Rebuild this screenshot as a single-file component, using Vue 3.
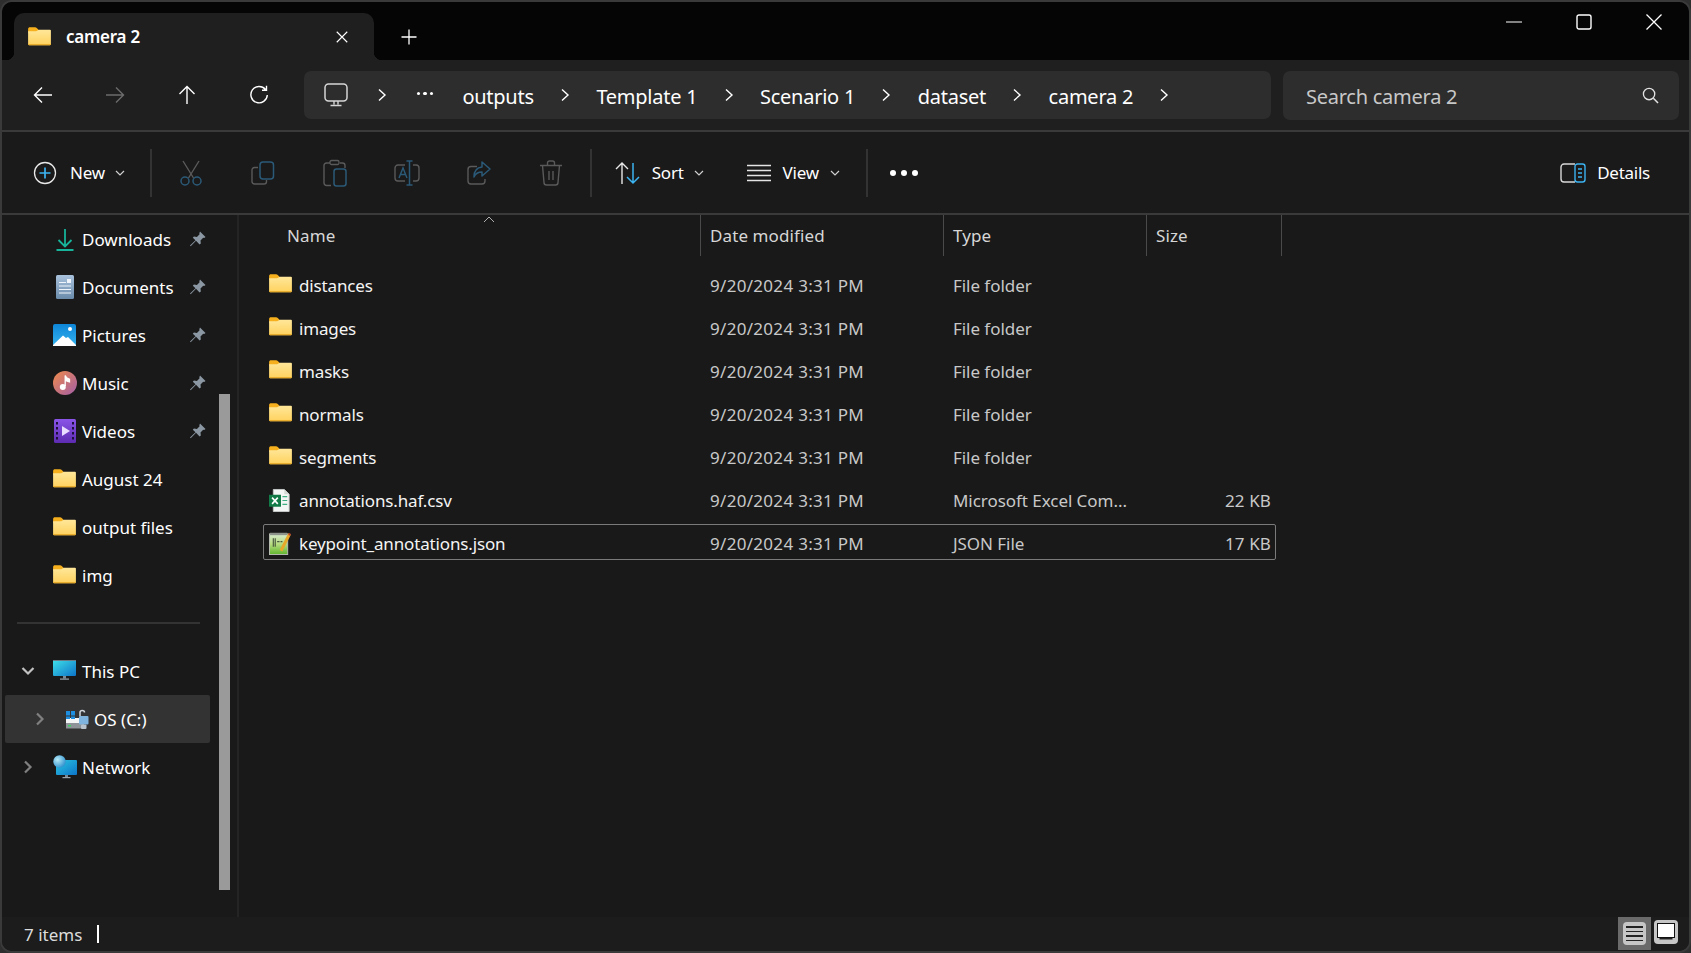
<script setup>
const folder = `<defs><linearGradient id="fg" x1="0" y1="0" x2="0" y2="1"><stop offset="0" stop-color="#ffe79a"/><stop offset="1" stop-color="#ffd25e"/></linearGradient></defs><path d="M0 2.2C0 1 .8.3 2 .3h5.4c.6 0 1 .2 1.400.5L11 3v3H0z" fill="#f6b01e"/><path d="M0 4.600h8.500L11.300 2.800H23c.6 0 1 .4 1 1V18c0 .7-.4 1.100-1 1.100H1c-.6 0-1-.4-1-1.100z" fill="url(#fg)"/><path d="M0 18h24v.3c0 .5-.4.800-1 .800H1c-.6 0-1-.3-1-.8z" fill="#e9ad2e"/>`

const icons = {
  folder,
  download: `<path d="M12 2v17M5.500 13l6.500 6.500 6.500-6.500" fill="none" stroke="#17b39a" stroke-width="1.800"/><path d="M3.500 23h17" stroke="#17b39a" stroke-width="2.200"/>`,
  docs: `<defs><linearGradient id="dc" x1="0" y1="0" x2="0" y2="1"><stop offset="0" stop-color="#a9c2dc"/><stop offset="1" stop-color="#6a8bab"/></linearGradient></defs><rect x="3" y="0" width="18" height="24" rx="1.500" fill="url(#dc)"/><path d="M6 7.500h7M6 11h12M6 14.500h12M6 18h12" stroke="#eef4fa" stroke-width="1.200"/><rect x="14" y="4" width="4" height="4" fill="#eef4fa"/>`,
  pics: `<defs><linearGradient id="pc" x1="0" y1="0" x2="0" y2="1"><stop offset="0" stop-color="#0e86d8"/><stop offset="1" stop-color="#35b3ee"/></linearGradient></defs><rect x="0" y="1" width="23" height="22" rx="2" fill="url(#pc)"/><circle cx="17" cy="6" r="2" fill="#fff"/><path d="M0 22l10-9.500 3 2.500 2-1 8 8v1H0z" fill="#fff"/>`,
  music: `<defs><linearGradient id="mc" x1="0" y1="0" x2="1" y2="1"><stop offset="0" stop-color="#ee8a4a"/><stop offset="1" stop-color="#a45ea8"/></linearGradient></defs><circle cx="12" cy="12" r="12" fill="url(#mc)"/><path d="M12.200 4.500v10.500M12.200 4.500c.6 2.600 2.600 3.200 4.300 3.800v2.600c-1.700-.4-3-1-4.300-2.200z" fill="#fff" stroke="#fff" stroke-width="1.300"/><circle cx="9.800" cy="16" r="3" fill="#fff"/>`,
  video: `<defs><linearGradient id="vc" x1="0" y1="0" x2="0" y2="1"><stop offset="0" stop-color="#8a55e8"/><stop offset="1" stop-color="#5d2bb0"/></linearGradient></defs><rect x="1" y="0" width="22" height="24" rx="1.500" fill="url(#vc)"/><path d="M3 3h2v2.500H3zM3 8h2v2.500H3zM3 13h2v2.500H3zM3 18h2v2.500H3zM19 3h2v2.500h-2zM19 8h2v2.500h-2zM19 13h2v2.500h-2zM19 18h2v2.500h-2z" fill="#1c0f3a"/><path d="M9 7l8 5-8 5z" fill="#e8ddff"/>`,
  pc: `<defs><linearGradient id="pcg" x1="0" y1="0" x2="1" y2="1"><stop offset="0" stop-color="#3fe0e8"/><stop offset="1" stop-color="#0d74c9"/></linearGradient></defs><rect x="0" y="1" width="23" height="16" rx="1" fill="url(#pcg)"/><path d="M0 1h23v1H0z" fill="#6c7a86"/><rect x="10" y="17" width="3" height="2.500" fill="#7a8894"/><rect x="7" y="19.500" width="9" height="1.200" fill="#98a4ae"/>`,
  drive: `<path d="M1 15.500h18v6H1z" fill="#8d9399"/><path d="M1 11h20v5H1z" fill="#f2f4f6"/><path d="M3 18h3v1.500H3z" fill="#3bd35f"/><path d="M1 4h4v4.500H1zM6 4h4v4.500H6zM1 9.500h4V12H1zM6 9.500h4V12H6z" fill="#1e8fe0"/><path d="M15 9V5.500c0-2.800 4.500-2.800 4.500 0" fill="none" stroke="#cfd6dc" stroke-width="1.500"/><rect x="14" y="9" width="9.500" height="8.500" rx="1" fill="#7fb4de"/><rect x="16" y="17.500" width="5.500" height="4.500" rx="1" fill="#b8c2ca"/>`,
  network: `<defs><linearGradient id="nw" x1="0" y1="0" x2="1" y2="1"><stop offset="0" stop-color="#2bc6e0"/><stop offset="1" stop-color="#0d74c9"/></linearGradient><radialGradient id="gl" cx=".35" cy=".35" r=".8"><stop offset="0" stop-color="#b8ecf8"/><stop offset="1" stop-color="#1c84c8"/></radialGradient></defs><rect x="3" y="5" width="21" height="15" rx="1" fill="url(#nw)"/><rect x="12" y="20" width="3" height="2" fill="#7a8894"/><rect x="9.500" y="22" width="8" height="1.200" fill="#98a4ae"/><circle cx="6.500" cy="6.500" r="6.200" fill="url(#gl)"/>`,
  excel: `<path d="M4.500 .5H16l5 5v18H4.500z" fill="#f4f6f5" stroke="#c6cac8"/><path d="M16 .5v5h5" fill="#d4d9d6"/><path d="M14 8h5M14 12h5M14 16h5" stroke="#3fae82" stroke-width="1.200"/><rect x="0" y="6" width="12.500" height="12.500" fill="#117a46"/><path d="M3.200 9l6 6.500M9.200 9l-6 6.500" stroke="#fff" stroke-width="1.700"/>`,
  json: `<defs><linearGradient id="jg" x1="0" y1="0" x2="0" y2="1"><stop offset="0" stop-color="#d8ecd0"/><stop offset=".5" stop-color="#b6db7e"/><stop offset="1" stop-color="#5fb52e"/></linearGradient></defs><rect x=".5" y="2" width="19" height="21.500" fill="url(#jg)" stroke="#b8bdb4"/><path d="M1 .8h18v2.500H1z" fill="#8e948c"/><path d="M4.500 6.500v9M6.500 6.500v9" stroke="#48583c" stroke-width="1.200"/><path d="M8.500 10h2.500M12 10h2" stroke="#48583c" stroke-width="1.200"/><path d="M21.500 2L12.500 19.500" stroke="#e8a92a" stroke-width="3.200"/><path d="M21 1l2 1-1 2-2-1z" fill="#b5402c"/>`
}

const quick = [
  { name: 'Downloads', icon: 'download', pin: true },
  { name: 'Documents', icon: 'docs', pin: true },
  { name: 'Pictures', icon: 'pics', pin: true },
  { name: 'Music', icon: 'music', pin: true },
  { name: 'Videos', icon: 'video', pin: true },
  { name: 'August 24', icon: 'folder' },
  { name: 'output files', icon: 'folder' },
  { name: 'img', icon: 'folder' }
]

const crumbs = ['outputs', 'Template 1', 'Scenario 1', 'dataset', 'camera 2']

const DATE = '9/20/2024 3:31 PM'
const files = [
  { name: 'distances', type: 'File folder', size: '', icon: 'folder' },
  { name: 'images', type: 'File folder', size: '', icon: 'folder' },
  { name: 'masks', type: 'File folder', size: '', icon: 'folder' },
  { name: 'normals', type: 'File folder', size: '', icon: 'folder' },
  { name: 'segments', type: 'File folder', size: '', icon: 'folder' },
  { name: 'annotations.haf.csv', type: 'Microsoft Excel Com...', size: '22 KB', icon: 'excel' },
  { name: 'keypoint_annotations.json', type: 'JSON File', size: '17 KB', icon: 'json', selected: true }
]
</script>

<template>
  <div class="window">
    <header class="titlebar">
      <div class="tab">
        <svg class="ic-folder" viewBox="0 0 24 20" v-html="icons.folder"></svg>
        <span class="tab-title">camera 2</span>
        <svg class="tab-close" viewBox="0 0 16 16"><path d="M2 2l12 12M14 2L2 14" stroke="#fff" stroke-width="1.300" fill="none" /></svg>
      </div>
      <button class="newtab">
        <svg viewBox="0 0 16 16" width="16" height="16"><path d="M8 .5v15M.5 8h15" stroke="#fff" stroke-width="1.300" /></svg>
      </button>
      <div class="controls">
        <div class="ctrl"><svg viewBox="0 0 16 16" width="16" height="16"><path d="M0 8h16" stroke="#fff" stroke-width="1.200" /></svg></div>
        <div class="ctrl"><svg viewBox="0 0 16 16" width="16" height="16"><rect x="1" y="1" width="14" height="14" rx="2" fill="none" stroke="#fff" stroke-width="1.400" /></svg></div>
        <div class="ctrl"><svg viewBox="0 0 16 16" width="16" height="16"><path d="M.5 .5l15 15M15.500 .5l-15 15" stroke="#fff" stroke-width="1.300" /></svg></div>
      </div>
    </header>

    <nav class="navbar">
      <div class="navbtn"><svg viewBox="0 0 20 20" width="20" height="20"><path d="M19 10H1.500M9 2.500L1.500 10 9 17.500" fill="none" stroke="#fff" stroke-width="1.400" /></svg></div>
      <div class="navbtn"><svg viewBox="0 0 20 20" width="20" height="20"><path d="M1 10h17.500M11 2.500l7.500 7.500-7.500 7.500" fill="none" stroke="#6c6c6c" stroke-width="1.400" /></svg></div>
      <div class="navbtn"><svg viewBox="0 0 20 20" width="20" height="20"><path d="M10 19V1.500M2.500 9L10 1.500 17.500 9" fill="none" stroke="#fff" stroke-width="1.400" /></svg></div>
      <div class="navbtn"><svg viewBox="0 0 20 20" width="20" height="20"><path d="M16.500 4.500A8.200 8.200 0 1 0 18.300 10M17.500 .8v4.400H13" fill="none" stroke="#fff" stroke-width="1.400" /></svg></div>
      <div class="address">
        <svg class="monitor" viewBox="0 0 24 24" width="24" height="24"><rect x="1" y="1" width="22" height="17" rx="3.500" fill="none" stroke="#d6d6d6" stroke-width="1.500" /><path d="M10 18v3.500M14 18v3.500M6.500 22.500h11" fill="none" stroke="#d6d6d6" stroke-width="1.400" /></svg>
        <svg class="chev first" viewBox="0 0 10 14" width="10" height="14"><path d="M2 1.500L8 7l-6 5.500" fill="none" stroke="#fff" stroke-width="1.400" /></svg>
        <div class="more"><b></b><b></b><b></b></div>
        <template v-for="c in crumbs" :key="c">
          <span class="crumb">{{ c }}</span>
          <svg class="chev" viewBox="0 0 10 14" width="10" height="14"><path d="M2 1.500L8 7l-6 5.500" fill="none" stroke="#fff" stroke-width="1.400" /></svg>
        </template>
      </div>
      <div class="search">
        <span class="search-text">Search camera 2</span>
        <svg viewBox="0 0 18 18" width="17" height="17"><circle cx="7.500" cy="7.500" r="6" fill="none" stroke="#e2e2e2" stroke-width="1.400" /><path d="M12 12l5 5" stroke="#e2e2e2" stroke-width="1.600" /></svg>
      </div>
    </nav>

    <section class="toolbar">
      <div class="tool new">
        <svg viewBox="0 0 24 24" width="24" height="24"><circle cx="12" cy="12" r="10.500" fill="none" stroke="#e8e8e8" stroke-width="1.300" /><path d="M12 6.500v11M6.500 12h11" stroke="#3db4f2" stroke-width="1.700" /></svg>
        <span>New</span>
        <svg class="caret" viewBox="0 0 10 6" width="10" height="6"><path d="M1 1l4 4 4-4" fill="none" stroke="#cfcfcf" stroke-width="1.200" /></svg>
      </div>
      <i class="tsep"></i>
      <div class="iconbtn"><svg viewBox="0 0 24 26" width="24" height="26"><path d="M4 1l10.500 17M20 1L9.500 18" fill="none" stroke="#5a5a5a" stroke-width="1.400" /><circle cx="6" cy="21" r="4" fill="none" stroke="#2b5a78" stroke-width="1.500" /><circle cx="18" cy="21" r="4" fill="none" stroke="#2b5a78" stroke-width="1.500" /></svg></div>
      <div class="iconbtn"><svg viewBox="0 0 24 24" width="24" height="24"><path d="M7 6.500H3.500A2.500 2.500 0 0 0 1 9v11.500A2.500 2.500 0 0 0 3.500 23H13a2.500 2.500 0 0 0 2.500-2.500V19" fill="none" stroke="#5a5a5a" stroke-width="1.400" /><rect x="9" y="1" width="13.500" height="17" rx="3" fill="none" stroke="#2b5a78" stroke-width="1.500" /></svg></div>
      <div class="iconbtn"><svg viewBox="0 0 24 28" width="24" height="28"><path d="M7 4H3.500A2.500 2.500 0 0 0 1 6.500V24a2.500 2.500 0 0 0 2.500 2.500H8M17 4h2.500A2.500 2.500 0 0 1 22 6.500V9" fill="none" stroke="#5a5a5a" stroke-width="1.400" /><rect x="7" y="1.500" width="9" height="4" rx="1.500" fill="none" stroke="#5a5a5a" stroke-width="1.300" /><rect x="11" y="10" width="12" height="17" rx="2.500" fill="none" stroke="#2b5a78" stroke-width="1.500" /></svg></div>
      <div class="iconbtn"><svg viewBox="0 0 26 26" width="26" height="26"><path d="M11 5H4a3 3 0 0 0-3 3v10a3 3 0 0 0 3 3h7M19 5h3a3 3 0 0 1 3 3v10a3 3 0 0 1-3 3h-3" fill="none" stroke="#5a5a5a" stroke-width="1.400" /><path d="M5 18L9 8l4 10M6.500 14.500h5" fill="none" stroke="#2b5a78" stroke-width="1.400" /><path d="M15.500 1v24M12.500 1h6M12.500 25h6" fill="none" stroke="#2b5a78" stroke-width="1.500" /></svg></div>
      <div class="iconbtn"><svg viewBox="0 0 24 24" width="24" height="24"><path d="M10 5.500H4A3 3 0 0 0 1 8.500V20a3 3 0 0 0 3 3h11a3 3 0 0 0 3-3v-2" fill="none" stroke="#5a5a5a" stroke-width="1.400" /><path d="M15 1l8 7-8 7v-4c-4 0-6.500 1.500-8 5 0-6 3-9.500 8-10z" fill="none" stroke="#2b5a78" stroke-width="1.500" stroke-linejoin="round" /></svg></div>
      <div class="iconbtn"><svg viewBox="0 0 24 26" width="24" height="26"><path d="M1 5.500h22M8.500 5.500V3a2 2 0 0 1 2-2h3a2 2 0 0 1 2 2v2.500M3.500 5.500l1.500 17a2.500 2.500 0 0 0 2.500 2.500h9a2.500 2.500 0 0 0 2.500-2.500l1.500-17M10 11v9M14 11v9" fill="none" stroke="#5a5a5a" stroke-width="1.400" /></svg></div>
      <i class="tsep second"></i>
      <div class="tool sort">
        <svg viewBox="0 0 26 24" width="26" height="24"><path d="M7 23V2M1 8l6-6 6 6" fill="none" stroke="#e8e8e8" stroke-width="1.400" /><path d="M18 2v20M12 16l6 6 6-6" fill="none" stroke="#3db4f2" stroke-width="1.500" /></svg>
        <span>Sort</span>
        <svg class="caret" viewBox="0 0 10 6" width="10" height="6"><path d="M1 1l4 4 4-4" fill="none" stroke="#cfcfcf" stroke-width="1.200" /></svg>
      </div>
      <div class="tool view">
        <svg viewBox="0 0 24 18" width="24" height="18"><path d="M0 1.500h24M0 6.500h24M0 11.500h24M0 16.500h24" stroke="#e4e4e4" stroke-width="1.400" /></svg>
        <span>View</span>
        <svg class="caret" viewBox="0 0 10 6" width="10" height="6"><path d="M1 1l4 4 4-4" fill="none" stroke="#cfcfcf" stroke-width="1.200" /></svg>
      </div>
      <i class="tsep third"></i>
      <div class="dots"><b></b><b></b><b></b></div>
      <div class="details">
        <svg viewBox="0 0 26 20" width="26" height="20"><path d="M15 1H4a3 3 0 0 0-3 3v12a3 3 0 0 0 3 3h11" fill="none" stroke="#d8d8d8" stroke-width="1.400" /><rect x="15" y="1" width="10" height="18" rx="2.500" fill="none" stroke="#3db4f2" stroke-width="1.400" /><path d="M18 6h4M18 10h4M18 14h4" stroke="#3db4f2" stroke-width="1.400" /></svg>
        <span>Details</span>
      </div>
    </section>

    <main class="body">
      <aside class="sidebar">
        <div v-for="q in quick" :key="q.name" class="side-row">
          <svg class="side-icon" :class="{ 'ic-folder': q.icon === 'folder' }" :viewBox="q.icon === 'folder' ? '0 0 24 20' : '0 0 24 24'" v-html="icons[q.icon]"></svg>
          <span class="side-name">{{ q.name }}</span>
          <svg v-if="q.pin" class="pin" viewBox="0 0 16 16" width="16" height="16"><path d="M10 .5l5.500 5.500-1.300 1-1-.3-2.700 2.700.3 3-1.200 1.100L6 9.800.7 15.300 0 14.600 5.500 9.300 2.800 6.800 3.900 5.600l3 .3L9.600 3.200l-.3-1z" fill="#8b97a3" /></svg>
        </div>
        <div class="side-divider"><hr /></div>
        <div class="side-row">
          <svg class="exp down" viewBox="0 0 14 10" width="14" height="10"><path d="M1.500 2L7 7.500 12.500 2" fill="none" stroke="#c2c2c2" stroke-width="2.200" /></svg>
          <svg class="side-icon" viewBox="0 0 24 24" v-html="icons.pc"></svg>
          <span class="side-name">This PC</span>
        </div>
        <div class="side-row active">
          <svg class="exp" viewBox="0 0 10 14" width="10" height="14"><path d="M2 1.500L7.500 7 2 12.500" fill="none" stroke="#808080" stroke-width="2.200" /></svg>
          <svg class="side-icon" viewBox="0 0 24 24" v-html="icons.drive"></svg>
          <span class="side-name">OS (C:)</span>
        </div>
        <div class="side-row">
          <svg class="exp" viewBox="0 0 10 14" width="10" height="14"><path d="M2 1.500L7.500 7 2 12.500" fill="none" stroke="#808080" stroke-width="2.200" /></svg>
          <svg class="side-icon" viewBox="0 0 24 24" v-html="icons.network"></svg>
          <span class="side-name">Network</span>
        </div>
        <div class="scroll-thumb"></div>
      </aside>

      <section class="files">
        <svg class="sort-caret" viewBox="0 0 12 7" width="12" height="7"><path d="M1 6l5-5 5 5" fill="none" stroke="#b0b0b0" stroke-width="1" /></svg>
        <div class="head">
          <div class="hcell hname">Name</div>
          <div class="hcell">Date modified</div>
          <div class="hcell">Type</div>
          <div class="hcell">Size</div>
        </div>
        <div v-for="f in files" :key="f.name" class="row" :class="{ selected: f.selected }">
          <div class="cell cname">
            <svg class="file-icon" :class="{ 'ic-folder': f.icon === 'folder' }" :viewBox="f.icon === 'folder' ? '0 0 24 20' : '0 0 24 24'" v-html="icons[f.icon]"></svg>
            <span>{{ f.name }}</span>
          </div>
          <div class="cell cmeta date">{{ DATE }}</div>
          <div class="cell cmeta">{{ f.type }}</div>
          <div class="cell csize">{{ f.size }}</div>
        </div>
      </section>
    </main>

    <footer class="status">
      <span class="count">7 items</span>
      <i class="cursor"></i>
      <div class="views">
        <div class="vbtn on"><div class="vlist"><b></b><b></b><b></b><b></b></div></div>
        <div class="vbtn tile"><div class="vtile"><i></i></div></div>
      </div>
    </footer>
  </div>
</template>

<style>
html, body { margin: 0; background: #2e2e2e; }
</style>

<style scoped>
.window {
  width: 1691px;
  height: 953px;
  box-sizing: border-box;
  border: 2px solid #3a3a3a;
  border-radius: 12px;
  overflow: hidden;
  display: flex;
  flex-direction: column;
  background: #191919;
  color: #fff;
  font-family: "Noto Sans", "Open Sans", sans-serif;
  font-size: 17px;
  letter-spacing: -0.25px;
  position: relative;
}
svg { display: block; flex: none; overflow: visible; }

.titlebar { height: 58px; flex: none; background: #050505; display: flex; }
.tab {
  position: relative;
  margin: 11px 0 0 12px;
  width: 360px;
  height: 47px;
  box-sizing: border-box;
  padding: 0 25px 0 14px;
  background: #1f1f1f;
  border-radius: 10px 10px 0 0;
  display: flex;
  align-items: center;
}
.tab::before, .tab::after {
  content: "";
  position: absolute;
  bottom: 0;
  width: 8px;
  height: 8px;
}
.tab::before { left: -8px; background: radial-gradient(circle at 0 0, transparent 8px, #1f1f1f 8.500px); }
.tab::after { right: -8px; background: radial-gradient(circle at 100% 0, transparent 8px, #1f1f1f 8.500px); }
.ic-folder { width: 23px; height: 19px; }
.tab-title { margin-left: 15px; font-weight: 600; font-size: 17px; flex: 1; }
.tab-close { width: 14px; height: 14px; }
.newtab {
  margin: 11px 0 0 27px;
  width: 16px;
  height: 47px;
  padding: 0;
  background: none;
  border: 0;
  display: flex;
  align-items: center;
}
.controls { margin-left: auto; display: flex; height: 40px; }
.ctrl { width: 70px; display: flex; align-items: center; justify-content: center; }

.navbar {
  height: 70px;
  flex: none;
  background: #1f1f1f;
  border-bottom: 2px solid #3a3a3a;
  display: flex;
  align-items: center;
  padding-left: 5px;
}
.navbtn { width: 72px; height: 48px; display: flex; align-items: center; justify-content: center; }
.address {
  margin-left: 9px;
  width: 967px;
  height: 48px;
  box-sizing: border-box;
  padding-left: 20px;
  background: #2d2d2d;
  border-radius: 7px;
  display: flex;
  align-items: center;
  font-size: 20px;
  gap: 26.300px;
}
.chev.first { margin-left: 3px; }
.more { margin-left: 3px; display: flex; gap: 3px; margin-top: -3px; }
.more b { width: 3.500px; height: 3.500px; border-radius: 50%; background: #fff; }
.crumb { white-space: nowrap; padding-top: 2px; }
.more + .crumb { margin-left: 3px; }
.search {
  margin-left: 12px;
  width: 396px;
  height: 49px;
  box-sizing: border-box;
  padding: 0 20px 0 23px;
  background: #2d2d2d;
  border-radius: 7px;
  display: flex;
  align-items: center;
  justify-content: space-between;
  font-size: 20px;
  color: #c8c8c8;
}
.search-text { padding-top: 2px; }

.toolbar {
  height: 81px;
  flex: none;
  background: #1a1a1a;
  border-bottom: 2px solid #3a3a3a;
  display: flex;
  align-items: center;
  padding-left: 31px;
}
.tool { display: flex; align-items: center; }
.tool span { margin-left: 13px; }
.caret { margin-left: 10px; }
.tsep { display: block; width: 2px; height: 48px; background: #333; margin-left: 25px; }
.iconbtn { width: 72px; display: flex; justify-content: center; }
.tsep + .iconbtn { margin-left: 3px; }
.tsep.second { margin-left: 3px; }
.tool.sort { margin-left: 23px; }
.tool.sort span { margin-left: 11px; }
.tool.view { margin-left: 43px; }
.tool.view span { margin-left: 12px; }
.tool.view .caret { margin-left: 11px; }
.tsep.third { margin-left: 26px; }
.dots { margin-left: 22px; display: flex; gap: 5px; }
.dots b { width: 6px; height: 6px; border-radius: 50%; background: #fff; }
.details { margin-left: auto; margin-right: 39px; display: flex; align-items: center; }
.details span { margin-left: 11px; }

.body { flex: 1; min-height: 0; display: flex; }
.sidebar {
  position: relative;
  width: 237px;
  flex: none;
  box-sizing: border-box;
  padding: 0 0 0 3px;
  border-right: 2px solid #242424;
  letter-spacing: 0;
}
.side-row { height: 48px; position: relative; display: flex; align-items: center; width: 205px; }
.side-row.active { background: #333; border-radius: 2px; }
.side-icon { position: absolute; left: 48px; top: 12px; width: 24px; height: 24px; }
.side-icon.ic-folder { top: 14px; width: 23px; height: 19px; }
.side-name { position: absolute; left: 77px; white-space: nowrap; }
.active .side-icon { left: 60px; }
.active .side-name { left: 89px; }
.pin { position: absolute; left: 185px; top: 16px; }
.exp { position: absolute; left: 18px; top: 17px; }
.exp.down { left: 16px; top: 19px; }
.active .exp { left: 30px; }
.side-divider { height: 48px; display: flex; align-items: center; }
.side-divider hr { margin: 0 0 0 12px; width: 183px; border: 0; height: 2px; background: #333; }
.scroll-thumb { position: absolute; left: 217px; top: 179px; width: 10.500px; height: 496px; background: #9a9a9a; }

.files { position: relative; flex: 1; min-width: 0; padding-left: 2px; }
.sort-caret { position: absolute; left: 244px; top: 1px; }
.head { display: grid; grid-template-columns: 460px 243px 203px 135px; height: 41px; margin-bottom: 10px; letter-spacing: 0.1px; }
.hcell {
  border-right: 1px solid #4a4a4a;
  box-sizing: border-box;
  padding: 0 0 0 9px;
  display: flex;
  align-items: center;
  color: #d6d6d6;
}
.hcell.hname { padding-left: 46px; }
.row {
  margin: 0 0 7px 22px;
  width: 1013px;
  height: 36px;
  box-sizing: border-box;
  padding-top: 2px;
  display: grid;
  grid-template-columns: 437px 243px 202px 125px;
  align-items: center;
  border: 1px solid transparent;
  border-radius: 2px;
}
.row.selected { border-color: #7a7a7a; }
.cell { white-space: nowrap; overflow: hidden; }
.cname { display: flex; align-items: center; padding-left: 5px; color: #f4f4f4; letter-spacing: -0.15px; overflow: visible; }
.cname span { margin-left: 7px; }
.file-icon { width: 23px; height: 23px; }
.file-icon.ic-folder { height: 19px; margin-top: -3px; }
.cmeta { padding-left: 9px; color: #c8c8c8; letter-spacing: -0.05px; }
.cmeta.date { letter-spacing: 0.3px; }
.csize { text-align: right; color: #c8c8c8; letter-spacing: 0.1px; }

.status {
  height: 34px;
  flex: none;
  background: #1c1c1c;
  display: flex;
  align-items: center;
  padding-left: 22px;
  color: #dcdcdc;
}
.count { letter-spacing: 0; }
.cursor { display: block; width: 2px; height: 18px; background: #fff; margin-left: 15px; }
.views { margin-left: auto; display: flex; align-items: stretch; height: 33px; padding-right: 10px; gap: 2px; align-self: flex-start; }
.vbtn { width: 30px; display: flex; align-items: center; justify-content: center; }
.vbtn.tile { width: 26px; }
.vbtn.on { background: #6a6a6a; width: 33px; }
.vlist {
  width: 23px;
  height: 23px;
  background: #c6c6c6;
  border-radius: 4px;
  box-sizing: border-box;
  padding: 4px 3px;
  display: flex;
  flex-direction: column;
  justify-content: space-between;
}
.vlist b { display: block; height: 1.500px; background: #222; }
.vtile {
  width: 24px;
  height: 24px;
  background: #c6c6c6;
  border-radius: 4px;
  box-sizing: border-box;
  padding: 3px;
  margin-top: -3px;
}
.vtile i { display: block; height: 13px; background: #fff; border: 1.500px solid #111; box-shadow: 0 4px 0 -2.500px #222; }
</style>
